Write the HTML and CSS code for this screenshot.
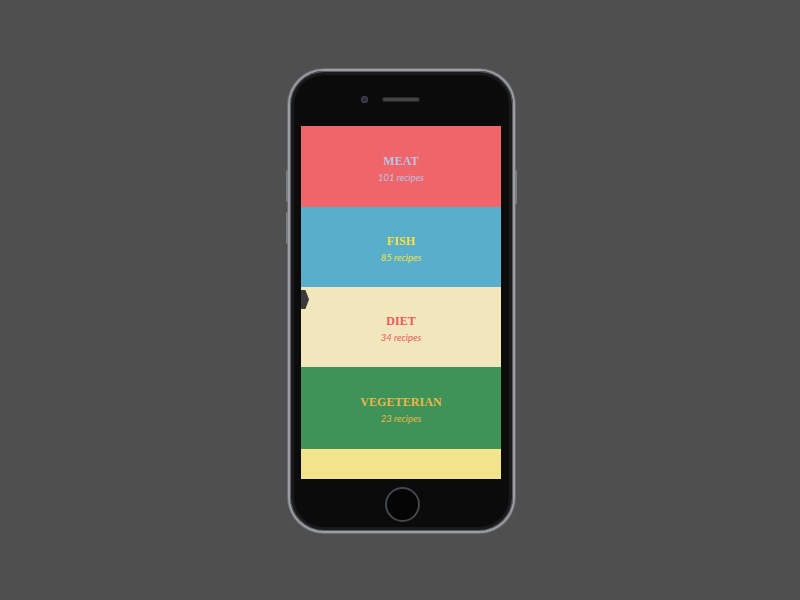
FILE: index.html
```html
<!DOCTYPE html>
<html>
<head>
<meta charset="utf-8">
<link rel="stylesheet" href="styles.css">
</head>
<body>
<div class="phone">
  <span class="side-btn left-a"></span>
  <span class="side-btn left-b"></span>
  <span class="side-btn right-a"></span>
  <div class="top-bar">
    <span class="camera"></span>
    <span class="speaker"></span>
  </div>
  <div class="screen">
    <div class="cat meat"><h2>MEAT</h2><p>101 recipes</p></div>
    <div class="cat fish"><h2>FISH</h2><p>85 recipes</p></div>
    <div class="cat diet"><span class="tab"></span><h2>DIET</h2><p>34 recipes</p></div>
    <div class="cat veg"><h2>VEGETERIAN</h2><p>23 recipes</p></div>
    <div class="cat extra"></div>
  </div>
  <div class="bottom-bar">
    <span class="home"></span>
  </div>
</div>
</body>
</html>
```
FILE: styles.css
```css
html, body {
  margin: 0;
  padding: 0;
}
body {
  width: 800px;
  height: 600px;
  background: #4f4f4f;
  box-sizing: border-box;
  padding-top: 69px;
  padding-left: 288px;
}
.phone {
  position: relative;
  width: 227px;
  height: 464px;
  box-sizing: border-box;
  border-radius: 36px;
  background: #0b0b0b;
  border: 2px solid #9c9da2;
  box-shadow: inset 0 0 0 1px #5a5b5f, inset 0 0 0 4px #1a1a1a, 0 0 0 1px #6b6c70;
  display: flex;
  flex-direction: column;
  padding: 0 12px 0 11px;
}
.side-btn {
  position: absolute;
  width: 2px;
  background: #7c7d82;
  border-radius: 1px;
}
.left-a { left: -4px; top: 99px; height: 32px; }
.left-b { left: -4px; top: 141px; height: 32px; }
.right-a { right: -4px; top: 99px; height: 34px; }
.top-bar {
  height: 55px;
  position: relative;
  flex: none;
}
.camera {
  position: absolute;
  left: 61px;
  top: 26px;
  width: 5px;
  height: 5px;
  border-radius: 50%;
  background: #2a2d3a;
  box-shadow: 0 0 0 1px #454852;
}
.speaker {
  position: absolute;
  left: 82px;
  top: 27px;
  width: 36px;
  height: 3px;
  border-radius: 2px;
  background: #444;
  box-shadow: 0 0 0 1px #262626;
}
.screen {
  height: 353px;
  display: flex;
  flex-direction: column;
  flex: none;
  overflow: hidden;
}
.cat {
  position: relative;
  display: flex;
  flex-direction: column;
  align-items: center;
  justify-content: center;
  flex: none;
  height: 80px;
  padding-top: 3px;
  box-sizing: border-box;
}
.cat h2 {
  margin: 0 0 4px;
  font-family: "Liberation Serif", "DejaVu Serif", serif;
  font-weight: bold;
  font-size: 12px;
  letter-spacing: 0.1px;
  line-height: 14px;
}
.cat p {
  margin: 0;
  font-family: Lato, "Liberation Sans", sans-serif;
  font-style: italic;
  font-size: 9.5px;
  line-height: 11px;
}
.meat { height: 81px; background: #ef6569; color: #b9c2e6; }
.fish { background: #59aecb; color: #f2e23c; }
.diet { background: #f2e6bd; color: #e95b5b; }
.veg { height: 82px; background: #3f9358; color: #ebb64b; }
.extra { height: 30px; background: #f1e48a; }
.tab {
  position: absolute;
  left: 0;
  top: 3px;
  width: 8px;
  height: 19px;
  background: #393939;
  clip-path: polygon(0 0, 55% 0, 100% 50%, 55% 100%, 0 100%);
}
.bottom-bar {
  flex: 1;
  display: flex;
  align-items: center;
  justify-content: center;
  padding-left: 2px;
  padding-bottom: 2px;
}
.home {
  width: 31px;
  height: 31px;
  border-radius: 50%;
  border: 2px solid #45464b;
  background: #050505;
}
```
